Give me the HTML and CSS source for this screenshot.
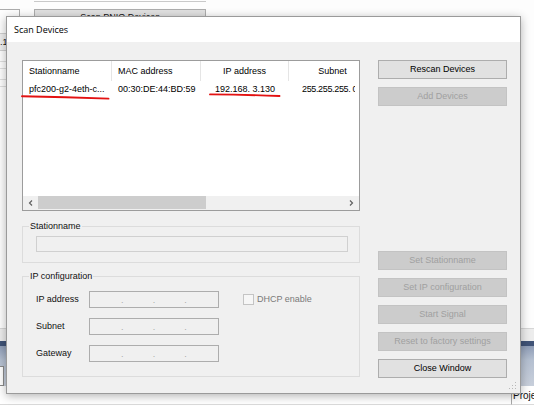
FILE: index.html
```html
<!DOCTYPE html>
<html>
<head>
<meta charset="utf-8">
<title>Scan Devices</title>
<link rel="stylesheet" href="styles.css">
</head>
<body>
<div class="app">
  <div class="app-main">
    <div class="side">
      <div class="side-box"></div>
      <div class="side-cell">.1</div>
      <div class="side-line"></div>
      <div class="side-line short"></div>
      <div class="side-line"></div>
      <div class="side-line short"></div>
    </div>
    <div class="pnio">
      <div class="pnio-bar"></div>
      <div class="pnio-btn">Scan PNIO Devices</div>
    </div>
  </div>
  <div class="app-sep"></div>
  <div class="app-nav"></div>
  <div class="app-tool"><div class="tool-input"></div></div>
  <div class="app-status">
    <div class="status-fill"></div>
    <div class="status-cell">Proje</div>
  </div>
</div>

<div class="dialog">
  <div class="titlebar">Scan Devices</div>
  <div class="dlg-body">
    <div class="left-col">
      <div class="listview">
        <div class="lv-clip">
          <div class="lv-header">
            <div class="lv-h c1 left">Stationname</div>
            <div class="lv-h c2 left">MAC address</div>
            <div class="lv-h c3">IP address</div>
            <div class="lv-h c4">Subnet</div>
          </div>
          <div class="lv-row">
            <div class="lv-c c1 left">pfc200-g2-4eth-c...</div>
            <div class="lv-c c2 left">00:30:DE:44:BD:59</div>
            <div class="lv-c c3">192.168.&nbsp;3.130</div>
            <div class="lv-c c4 subnet">255.255.255.&nbsp;0</div>
          </div>
        </div>
        <div class="hscroll">
          <div class="sb-arrow"><svg width="15" height="14" viewBox="0 0 15 14"><polyline points="9,4.5 6.5,7 9,9.5" fill="none" stroke="#606060" stroke-width="1.2"/></svg></div>
          <div class="sb-track"><div class="sb-thumb"></div></div>
          <div class="sb-arrow"><svg width="15" height="14" viewBox="0 0 15 14"><polyline points="6,4.5 8.5,7 6,9.5" fill="none" stroke="#606060" stroke-width="1.2"/></svg></div>
        </div>
      </div>

      <fieldset class="group g-station">
        <legend>Stationname</legend>
        <div class="group-content">
          <div class="textbox"></div>
        </div>
      </fieldset>

      <fieldset class="group g-ip">
        <legend>IP configuration</legend>
        <div class="group-content ip-grid">
          <div class="ip-label">IP address</div>
          <div class="ipbox"><span class="seg"></span><span class="dot">.</span><span class="seg"></span><span class="dot">.</span><span class="seg"></span><span class="dot">.</span><span class="seg"></span></div>
          <div class="dhcp"><span class="check"></span><span class="dhcp-text">DHCP enable</span></div>

          <div class="ip-label">Subnet</div>
          <div class="ipbox"><span class="seg"></span><span class="dot">.</span><span class="seg"></span><span class="dot">.</span><span class="seg"></span><span class="dot">.</span><span class="seg"></span></div>
          <div></div>

          <div class="ip-label">Gateway</div>
          <div class="ipbox"><span class="seg"></span><span class="dot">.</span><span class="seg"></span><span class="dot">.</span><span class="seg"></span><span class="dot">.</span><span class="seg"></span></div>
          <div></div>
        </div>
      </fieldset>
    </div>

    <div class="right-col">
      <div class="btn-group">
        <div class="btn">Rescan Devices</div>
        <div class="btn disabled">Add Devices</div>
      </div>
      <div class="btn-group lower">
        <div class="btn disabled">Set Stationname</div>
        <div class="btn disabled">Set IP configuration</div>
        <div class="btn disabled">Start Signal</div>
        <div class="btn disabled">Reset to factory settings</div>
        <div class="btn">Close Window</div>
      </div>
    </div>
  </div>
  <svg class="grip" width="8" height="8" viewBox="0 0 8 8">
    <rect x="6" y="0" width="1" height="1" fill="#b8b8b8"/>
    <rect x="3" y="3" width="1" height="1" fill="#b8b8b8"/>
    <rect x="6" y="3" width="1" height="1" fill="#b8b8b8"/>
    <rect x="0" y="6" width="1" height="1" fill="#b8b8b8"/>
    <rect x="3" y="6" width="1" height="1" fill="#b8b8b8"/>
    <rect x="6" y="6" width="1" height="1" fill="#b8b8b8"/>
  </svg>
</div>

<svg class="marks" width="534" height="411" viewBox="0 0 534 411">
  <path d="M22 96.2 Q66 96.8 108.5 98.6" fill="none" stroke="#e31212" stroke-width="1.9" stroke-linecap="round"/>
  <path d="M210 94.4 Q246 94.7 279.5 96" fill="none" stroke="#e31212" stroke-width="1.9" stroke-linecap="round"/>
</svg>
</body>
</html>
```

FILE: styles.css
```css
* { box-sizing: border-box; }
html, body { margin: 0; padding: 0; }
body {
  width: 534px;
  height: 411px;
  overflow: hidden;
  position: relative;
  background: #ffffff;
  font-family: "Liberation Sans", Arial, sans-serif;
  font-size: 9px;
  color: #111;
}

/* ---------- background application ---------- */
.app { display: flex; flex-direction: column; height: 411px; }
.app-main { height: 328px; display: flex; background: #fdfdfd; }
.side { width: 20px; display: flex; flex-direction: column; }
.side-box { margin-top: 9px; height: 24px; border-top: 1px solid #adadad; border-right: 1px solid #adadad; }
.side-cell {
  height: 18px;
  border-top: 1px solid #cfcfcf;
  border-bottom: 1px solid #cfcfcf;
  background: #eeeeee;
  line-height: 16px;
  white-space: nowrap;
  overflow: hidden;
}
.side-line { margin-top: 10px; border-top: 1px solid #dedede; }
.side-line.short { margin-top: 6px; }
.pnio { margin-left: 14px; width: 172px; }
.pnio-bar { height: 2px; border-bottom: 1px solid #c9c9c9; }
.pnio-btn {
  margin-top: 7px;
  height: 18px;
  background: #e1e1e1;
  border: 1px solid #adadad;
  text-align: center;
  line-height: 14px;
}
.app-sep { height: 13px; background: #ececec; border-top: 1px solid #d6d6d6; }
.app-nav { height: 5px; background: #405377; }
.app-tool {
  height: 40px;
  background: linear-gradient(#8e9cb6 0%, #b4bfd0 35%, #c8cfdb 100%);
  display: flex;
  align-items: flex-end;
}
.tool-input { width: 4px; height: 20px; background: #fff; border: 1px solid #8a8a8a; border-left: none; }
.app-status { height: 25px; display: flex; background: #fff; }
.status-fill { flex: 1; border-bottom: 1px solid #dadada; height: 19px; }
.status-cell {
  width: 23px;
  height: 19px;
  border-left: 1px solid #a8a8a8;
  border-bottom: 1px solid #dadada;
  padding-left: 1px;
  line-height: 20px;
  font-size: 10px;
  white-space: nowrap;
  overflow: hidden;
}

/* ---------- dialog window ---------- */
.dialog {
  position: absolute;
  left: 6px;
  top: 16px;
  width: 515px;
  height: 378px;
  border: 1px solid #9a9a9a;
  background: #f0f0f0;
  box-shadow: 0 2px 9px rgba(0, 0, 0, 0.3);
  display: flex;
  flex-direction: column;
}
.titlebar {
  height: 25px;
  background: #ffffff;
  padding-left: 7px;
  line-height: 26px;
  font-family: "Open Sans", "Liberation Sans", sans-serif;
  font-size: 9px;
  color: #000;
}
.dlg-body { display: flex; gap: 18px; padding: 18px 13px 0 15px; }
.left-col { width: 338px; display: flex; flex-direction: column; }
.right-col { width: 129px; display: flex; flex-direction: column; }

/* list view */
.listview {
  height: 151px;
  border: 1px solid #9c9c9c;
  background: #ffffff;
  display: flex;
  flex-direction: column;
}
.lv-clip { flex: 1; overflow: hidden; margin-right: 4px; }
.lv-header, .lv-row { display: flex; white-space: nowrap; }
.lv-header { height: 20px; }
.lv-row { height: 16px; }
.lv-h, .lv-c { flex: none; overflow: hidden; text-align: center; color: #000; }
.lv-h { line-height: 20px; border-right: 1px solid #e5e5e5; }
.lv-c { line-height: 16px; }
.lv-h.left, .lv-c.left { text-align: left; padding-left: 6px; }
.lv-c.subnet { text-align: left; padding-left: 13px; letter-spacing: -0.35px; }
.c1 { width: 89px; }
.c2 { width: 89px; }
.c3 { width: 88px; }
.c4 { width: 88px; }
.hscroll { height: 14px; display: flex; background: #f0f0f0; }
.sb-arrow { width: 15px; height: 14px; flex: none; }
.sb-arrow svg { display: block; }
.sb-track { flex: 1; }
.sb-thumb { width: 168px; height: 13px; background: #cdcdcd; }

/* group boxes */
.group {
  margin: 10px 0 0;
  padding: 0 6px;
  border: 1px solid #dcdcdc;
  min-width: 0;
}
.group legend {
  padding: 0 1px;
  font-size: 9px;
  line-height: 11px;
  color: #111;
}
.g-station .group-content { padding: 4px 5px 10px 7px; }
.textbox { height: 16px; border: 1px solid #d0d0d0; background: #f0f0f0; }
.g-ip { margin-top: 8px; }
.ip-grid {
  display: grid;
  grid-template-columns: 53px 130px auto;
  grid-auto-rows: 17px;
  row-gap: 10px;
  column-gap: 0;
  padding: 9px 5px 14px 7px;
  align-items: center;
}
.ip-label { line-height: 17px; color: #111; }
.ipbox {
  height: 17px;
  border: 1px solid #adadad;
  background: #f0f0f0;
  display: flex;
  padding: 0 2px;
}
.seg { flex: 1; }
.dot { color: #a8a8a8; line-height: 17px; }
.dhcp { display: flex; align-items: center; margin-left: 24px; }
.check { width: 11px; height: 11px; border: 1px solid #c4c4c4; background: #f6f6f6; }
.dhcp-text { margin-left: 3px; color: #7a7a7a; line-height: 17px; }

/* buttons */
.btn-group { display: flex; flex-direction: column; gap: 8px; }
.btn-group.lower { margin-top: 145px; }
.btn {
  height: 19px;
  border: 1px solid #adadad;
  background: #e1e1e1;
  text-align: center;
  line-height: 17px;
  color: #000;
  white-space: nowrap;
}
.btn.disabled { background: #cccccc; border-color: #c3c3c3; color: #a0a0a0; }

.grip { position: absolute; right: 3px; bottom: 3px; }
.marks { position: absolute; left: 0; top: 0; pointer-events: none; }
```
